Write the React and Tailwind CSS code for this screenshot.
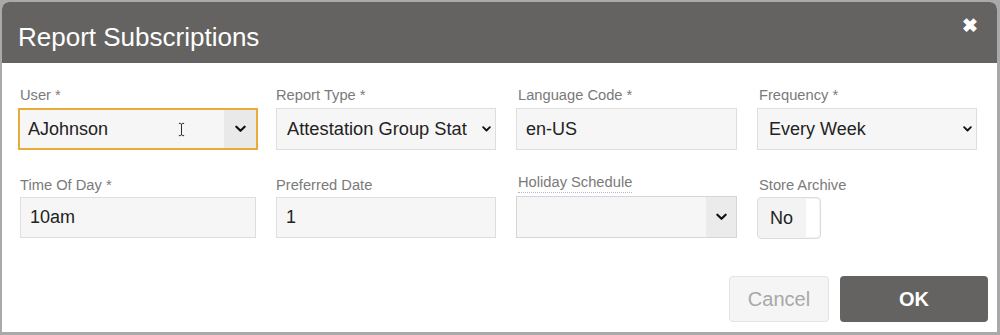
import React from "react";

function Chevron({ className = "" }) {
  return (
    <svg viewBox="0 0 12 8" className={className} fill="none">
      <path d="M1.5 1.5 L6 6 L10.5 1.5" stroke="#111" strokeWidth="2.4" strokeLinecap="round" strokeLinejoin="round" />
    </svg>
  );
}

function Label({ children, dotted }) {
  return (
    <div className="h-[20px] text-[14.7px] leading-[20px] text-[#7a7a7a]">
      <span className={dotted ? "border-b border-dotted border-[#b9b3d6] pb-[2px]" : ""}>{children}</span>
    </div>
  );
}

function TextBox({ value, h = "h-[41px]" }) {
  return (
    <div className={`${h} bg-[#f6f6f6] border border-[#dedede] flex items-center pl-[9px] text-[18px] text-[#222]`}>
      {value}
    </div>
  );
}

export default function App() {
  return (
    <div className="w-[1000px] h-[335px] bg-[#a9a9a9] pt-[2px] pl-[2px] font-['Liberation_Sans',Arial,sans-serif]">
      <div className="w-[995px] h-[330px] bg-white rounded-t-[7px] overflow-hidden flex flex-col">
        <div className="h-[61px] bg-[#656361] flex items-center justify-between pl-[16px] pr-[19px] shrink-0">
          <h1 className="text-[26px] text-white mt-[10px]">Report Subscriptions</h1>
          <span className="text-white text-[19px] font-bold leading-none -mt-[14px]">✖</span>
        </div>

        <div className="px-[18px] pt-[22px]">
          <div className="grid grid-cols-[236px_220px_221px_220px] gap-x-[20px]">
            <div>
              <Label>User *</Label>
              <div className="mt-[3px] -mx-[2px] h-[42px] border-2 border-[#e9ac3a] bg-[#f6f6f6] flex items-stretch">
                <div className="flex-1 flex items-center pl-[8px] text-[18px] text-[#222] relative">
                  AJohnson
                  <svg viewBox="0 0 8 16" className="absolute left-[158px] top-[12px] w-[7px] h-[15px]">
                    <path d="M1 1 H3 Q4 1.5 4 3 V13 Q4 14.5 3 15 H1 M7 1 H5 Q4 1.5 4 3 M4 13 Q4 14.5 5 15 H7" stroke="#222" strokeWidth="1.1" fill="none" />
                  </svg>
                </div>
                <div className="w-[32px] bg-[#e9e9e9] flex items-center justify-center">
                  <Chevron className="w-[11px] h-[8px]" />
                </div>
              </div>
            </div>
            <div>
              <Label>Report Type *</Label>
              <div className="mt-[3px] h-[42px] bg-[#f6f6f6] border border-[#dedede] flex items-center pl-[10px] pr-[4px] text-[18.3px] text-[#222] justify-between">
                <span className="whitespace-nowrap overflow-hidden">Attestation Group Stat</span>
                <Chevron className="w-[9px] h-[6px] shrink-0 ml-[4px]" />
              </div>
            </div>
            <div className="pl-[2px]">
              <Label>Language Code *</Label>
              <div className="mt-[3px] -ml-[2px]">
                <TextBox value="en-US" h="h-[42px]" />
              </div>
            </div>
            <div className="pl-[2px]">
              <Label>Frequency *</Label>
              <div className="mt-[3px] -ml-[2px] h-[42px] bg-[#f6f6f6] border border-[#dedede] flex items-center pl-[11px] pr-[4px] text-[18px] text-[#222] justify-between">
                <span>Every Week</span>
                <Chevron className="w-[9px] h-[6px]" />
              </div>
            </div>
          </div>

          <div className="grid grid-cols-[236px_220px_221px_220px] gap-x-[20px] mt-[22px]">
            <div className="pt-[3px]">
              <Label>Time Of Day *</Label>
              <div className="mt-[2px]">
                <TextBox value="10am" />
              </div>
            </div>
            <div className="pt-[3px]">
              <Label>Preferred Date</Label>
              <div className="mt-[2px]">
                <TextBox value="1" />
              </div>
            </div>
            <div className="pl-[2px]">
              <Label dotted>Holiday Schedule</Label>
              <div className="mt-[4px] -ml-[2px] h-[42px] bg-[#f6f6f6] border border-[#d6d6d6] flex items-stretch">
                <div className="flex-1" />
                <div className="w-[30px] bg-[#ebebeb] flex items-center justify-center">
                  <Chevron className="w-[11px] h-[8px]" />
                </div>
              </div>
            </div>
            <div className="pt-[3px] pl-[2px]">
              <Label>Store Archive</Label>
              <div className="mt-[2px] -ml-[2px] w-[64px] h-[42px] rounded-[4px] border border-[#dcdcdc] bg-[#f3f3f3] flex items-center overflow-hidden">
                <span className="pl-[12px] text-[18px] text-[#222] flex-1">No</span>
                <div className="w-[13px] h-[38px] bg-white rounded-r-[3px] mr-[1px]" />
              </div>
            </div>
          </div>
        </div>

        <div className="flex justify-end gap-[11px] pr-[9px] mt-[37px]">
          <button className="w-[100px] h-[46px] rounded-[4px] bg-[#f5f5f5] border border-[#e3e3e3] text-[20px] text-[#a8a8a8]">
            Cancel
          </button>
          <button className="w-[148px] h-[46px] rounded-[4px] bg-[#656361] text-[20px] font-bold text-white">
            OK
          </button>
        </div>
      </div>
    </div>
  );
}
